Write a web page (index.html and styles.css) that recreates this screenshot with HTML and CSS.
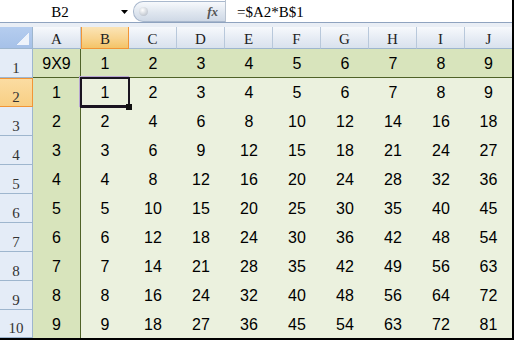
FILE: index.html
```html
<!DOCTYPE html>
<html>
<head>
<meta charset="utf-8">
<link rel="stylesheet" href="styles.css">
</head>
<body>
<div class="app">
  <div class="fbar">
    <div class="namebox">
      <span class="name">B2</span>
      <svg class="arrow" width="7" height="4" viewBox="0 0 7 4"><path d="M0 0H7L3.5 4Z" fill="#000"/></svg>
    </div>
    <div class="pill"><span class="knob"></span><span class="fx">fx</span></div>
    <div class="vsep"></div>
    <div class="formula">=$A2*B$1</div>
  </div>
  <div class="sep"></div>
  <div class="sheet">
    <div class="corner"><span class="tri"></span></div>
    <div class="ch">A</div><div class="ch sel">B</div><div class="ch">C</div><div class="ch">D</div><div class="ch">E</div><div class="ch">F</div><div class="ch">G</div><div class="ch">H</div><div class="ch">I</div><div class="ch last">J</div>

    <div class="rh">1</div>
    <div class="c r1 ca">9X9</div><div class="c r1">1</div><div class="c r1">2</div><div class="c r1">3</div><div class="c r1">4</div><div class="c r1">5</div><div class="c r1">6</div><div class="c r1">7</div><div class="c r1">8</div><div class="c r1">9</div>

    <div class="rh sel">2</div>
    <div class="c ca">1</div><div class="c active">1<span class="selbox"></span><span class="handle"></span></div><div class="c">2</div><div class="c">3</div><div class="c">4</div><div class="c">5</div><div class="c">6</div><div class="c">7</div><div class="c">8</div><div class="c">9</div>

    <div class="rh">3</div>
    <div class="c ca">2</div><div class="c">2</div><div class="c">4</div><div class="c">6</div><div class="c">8</div><div class="c">10</div><div class="c">12</div><div class="c">14</div><div class="c">16</div><div class="c">18</div>

    <div class="rh">4</div>
    <div class="c ca">3</div><div class="c">3</div><div class="c">6</div><div class="c">9</div><div class="c">12</div><div class="c">15</div><div class="c">18</div><div class="c">21</div><div class="c">24</div><div class="c">27</div>

    <div class="rh">5</div>
    <div class="c ca">4</div><div class="c">4</div><div class="c">8</div><div class="c">12</div><div class="c">16</div><div class="c">20</div><div class="c">24</div><div class="c">28</div><div class="c">32</div><div class="c">36</div>

    <div class="rh">6</div>
    <div class="c ca">5</div><div class="c">5</div><div class="c">10</div><div class="c">15</div><div class="c">20</div><div class="c">25</div><div class="c">30</div><div class="c">35</div><div class="c">40</div><div class="c">45</div>

    <div class="rh">7</div>
    <div class="c ca">6</div><div class="c">6</div><div class="c">12</div><div class="c">18</div><div class="c">24</div><div class="c">30</div><div class="c">36</div><div class="c">42</div><div class="c">48</div><div class="c">54</div>

    <div class="rh">8</div>
    <div class="c ca">7</div><div class="c">7</div><div class="c">14</div><div class="c">21</div><div class="c">28</div><div class="c">35</div><div class="c">42</div><div class="c">49</div><div class="c">56</div><div class="c">63</div>

    <div class="rh">9</div>
    <div class="c ca">8</div><div class="c">8</div><div class="c">16</div><div class="c">24</div><div class="c">32</div><div class="c">40</div><div class="c">48</div><div class="c">56</div><div class="c">64</div><div class="c">72</div>

    <div class="rh">10</div>
    <div class="c ca">9</div><div class="c">9</div><div class="c">18</div><div class="c">27</div><div class="c">36</div><div class="c">45</div><div class="c">54</div><div class="c">63</div><div class="c">72</div><div class="c">81</div>
  </div>
</div>
</body>
</html>
```

FILE: styles.css
```css
* { box-sizing: border-box; }
html, body { margin: 0; padding: 0; background: #fff; }

.app {
  width: 514px;
  height: 340px;
  border-right: 2px solid #000;
  border-bottom: 2px solid #000;
  display: flex;
  flex-direction: column;
  overflow: hidden;
}

/* formula bar */
.fbar {
  height: 22px;
  display: flex;
  align-items: center;
  background: #fff;
  font-family: "Liberation Serif", serif;
  font-size: 15px;
  color: #000;
}
.namebox {
  width: 133px;
  height: 100%;
  display: flex;
  align-items: center;
}
.namebox .name {
  width: 120px;
  text-align: center;
  padding-top: 2px;
}
.namebox .arrow { margin-left: 1px; margin-top: 1px; }
.pill {
  width: 92px;
  height: 21px;
  margin-top: 1px;
  border: 1px solid #a9b8cd;
  border-right: none;
  border-radius: 10px 0 0 10px;
  background: linear-gradient(#f7f9fc, #dfe6ef 55%, #cfd9e6);
  display: flex;
  align-items: center;
  justify-content: space-between;
  padding: 0 7px 0 5px;
}
.knob {
  width: 9px;
  height: 9px;
  border-radius: 50%;
  background: radial-gradient(circle at 40% 35%, #ffffff, #c3c9d2 70%, #9ea6b2);
}
.fx {
  font-family: "Liberation Serif", serif;
  font-style: italic;
  font-weight: bold;
  font-size: 13px;
  color: #555;
}
.vsep {
  width: 1px;
  height: 22px;
  background: #b9c3d0;
}
.formula {
  padding-left: 11px;
  padding-top: 2px;
}
.sep {
  height: 5px;
  border-top: 1px solid #8fa3bf;
  background: #e9eef5;
}

/* sheet grid */
.sheet {
  display: grid;
  grid-template-columns: 33px repeat(9, 48px) 47px;
  grid-template-rows: 22px repeat(9, 29px) 28px;
}
.corner {
  background: linear-gradient(#b5cdef, #a6c1e8);
  border-right: 1px solid #9eb6ce;
  border-bottom: 1px solid #9eb6ce;
  display: flex;
  justify-content: flex-end;
  align-items: flex-end;
  padding: 0 3px 3px 0;
}
.tri {
  width: 12px;
  height: 12px;
  background: linear-gradient(to bottom right, transparent 50%, #eef3fb 50%);
}
.ch {
  background: linear-gradient(#f7f9fc, #e4eaf3 60%, #d9e2ee);
  border-right: 1px solid #b8c8db;
  border-bottom: 1px solid #9eb6ce;
  font-family: "Liberation Serif", serif;
  font-size: 15px;
  color: #222;
  text-align: center;
  line-height: 22px;
  padding-top: 1px;
}
.ch.sel {
  background: linear-gradient(#fbe4b6, #f8d48f 55%, #f4c468);
  border-right: 1px solid #f29536;
  border-left: 1px solid #f29536;
  border-bottom: 1px solid #f29536;
}
.ch.last { border-right: none; }
.rh {
  background: #e4ecf7;
  border-right: 1px solid #9eb6ce;
  border-bottom: 1px solid #9eb6ce;
  font-family: "Liberation Serif", serif;
  font-size: 15px;
  color: #333;
  display: flex;
  justify-content: center;
  align-items: flex-end;
  line-height: 15px;
  padding-bottom: 1px;
}
.rh.sel {
  background: linear-gradient(#fbdca2, #f8cf84);
  border-right: 1px solid #f29536;
  border-bottom: 1px solid #f29536;
  border-top: 1px solid #f29536;
}

.c {
  background: #ebf1de;
  font-family: "Liberation Sans", Arial, sans-serif;
  font-size: 16px;
  color: #000;
  display: flex;
  justify-content: center;
  align-items: center;
  padding-top: 1px;
}
.c.ca {
  background: #d8e4bc;
  border-right: 1px solid #4f6228;
}
.c.r1 {
  background: #d8e4bc;
  border-bottom: 1px solid #4f6228;
}
.c.active { position: relative; }
.selbox {
  position: absolute;
  left: -1px;
  top: -1px;
  width: 50px;
  height: 31px;
  border: 2px solid #1a1420;
  border-bottom-width: 3px;
  box-shadow: -1px -1px 0 #b8a6d2;
}
.handle {
  position: absolute;
  right: -3px;
  bottom: -3px;
  width: 6px;
  height: 6px;
  background: #111;
}
```
